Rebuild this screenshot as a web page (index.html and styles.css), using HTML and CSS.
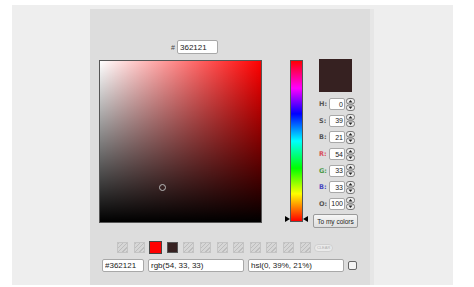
FILE: index.html
```html
<!DOCTYPE html>
<html lang="en">
<head>
    <meta charset="UTF-8">
    <title>Color picker</title>
    <link rel="stylesheet" href="styles.css">
</head>
<body>

<div class="wrap">
    <div class="panel">
        <div class="hex-row">
            <span class="hash">#</span>
            <input class="field hex" type="text" value="362121">
        </div>

        <div class="main-row">
            <div class="sv-box">
                <div class="sv-white"></div>
                <div class="sv-black"></div>
                <div class="sv-cursor"></div>
            </div>

            <div class="hue-bar">
                <span class="arrow arrow-left"></span>
                <span class="arrow arrow-right"></span>
            </div>

            <div class="side">
                <div class="preview"></div>
                <div class="num-row"><label>H:</label><input class="field num" value="0"><svg class="spin" viewBox="0 0 9 13"><use href="#spinner"/></svg></div>
                <div class="num-row"><label>S:</label><input class="field num" value="39"><svg class="spin" viewBox="0 0 9 13"><use href="#spinner"/></svg></div>
                <div class="num-row"><label>B:</label><input class="field num" value="21"><svg class="spin" viewBox="0 0 9 13"><use href="#spinner"/></svg></div>
                <div class="num-row"><label class="lbl-r">R:</label><input class="field num" value="54"><svg class="spin" viewBox="0 0 9 13"><use href="#spinner"/></svg></div>
                <div class="num-row"><label class="lbl-g">G:</label><input class="field num" value="33"><svg class="spin" viewBox="0 0 9 13"><use href="#spinner"/></svg></div>
                <div class="num-row"><label class="lbl-b">B:</label><input class="field num" value="33"><svg class="spin" viewBox="0 0 9 13"><use href="#spinner"/></svg></div>
                <div class="num-row"><label>O:</label><input class="field num" value="100"><svg class="spin" viewBox="0 0 9 13"><use href="#spinner"/></svg></div>
                <button class="btn-add">To my colors</button>
            </div>
        </div>

        <div class="swatch-row">
            <span class="swatch empty"></span>
            <span class="swatch empty"></span>
            <span class="swatch selected" style="background-color: #ff0000;"></span>
            <span class="swatch filled" style="background-color: #362121;"></span>
            <span class="swatch empty"></span>
            <span class="swatch empty"></span>
            <span class="swatch empty"></span>
            <span class="swatch empty"></span>
            <span class="swatch empty"></span>
            <span class="swatch empty"></span>
            <span class="swatch empty"></span>
            <span class="swatch empty"></span>
            <span class="btn-clear">CLEAR</span>
        </div>

        <div class="out-row">
            <input class="field out-hex" value="#362121">
            <input class="field out-wide" value="rgb(54, 33, 33)">
            <input class="field out-wide" value="hsl(0, 39%, 21%)">
            <span class="check"></span>
        </div>
    </div>
</div>

<svg width="0" height="0" style="position:absolute">
    <defs>
        <g id="spinner">
            <rect x="0.5" y="0.5" width="8" height="5.5" rx="2.5" fill="#ececec" stroke="#7a7a7a"/>
            <rect x="0.5" y="7" width="8" height="5.5" rx="2.5" fill="#ececec" stroke="#7a7a7a"/>
            <path d="M2.5 4.6 L4.5 2 L6.5 4.6 Z" fill="#222"/>
            <path d="M2.5 8.4 L4.5 11 L6.5 8.4 Z" fill="#222"/>
        </g>
    </defs>
</svg>

</body>
</html>
```

FILE: styles.css
```css
:root {
    --outer: #eeeeee;
    --panel: #dddddd;
    --field-border: #a8a8a8;
    --text: #333333;
}
body {
    margin: 0;
    background-color: #ffffff;
    font-family: 'Liberation Sans', Arial, sans-serif;
    color: var(--text);
}
.wrap {
    margin: 5px 0 0 12px;
    width: 441px;
    height: 280px;
    background-color: var(--outer);
    padding: 4px 0 0 78px;
    box-sizing: border-box;
}
.panel {
    width: 284px;
    height: 276px;
    background-color: var(--panel);
    border-right: 4px solid #e6e6e6;
    box-sizing: border-box;
    padding-top: 31px;
}
.field {
    display: block;
    box-sizing: border-box;
    height: 13px;
    margin: 0;
    padding: 0 2px;
    border: 1px solid var(--field-border);
    border-radius: 2px;
    background-color: #ffffff;
    font-family: 'Liberation Sans', Arial, sans-serif;
    font-size: 8px;
    color: #222222;
    outline: none;
}
.hex-row {
    display: flex;
    align-items: center;
    margin-left: 81px;
}
.hash { font-size: 7px; width: 6px; color: #444; }
.hex { width: 41px; height: 14px; }

.main-row {
    display: flex;
    align-items: flex-start;
    margin-top: 6px;
    padding-left: 9px;
}
.sv-box {
    position: relative;
    width: 163px;
    height: 163px;
    border: 1px solid #555;
    box-sizing: border-box;
    background-color: #ff0000;
}
.sv-white, .sv-black { position: absolute; inset: 0; }
.sv-white { background: linear-gradient(to right, #ffffff, rgba(255,255,255,0)); }
.sv-black { background: linear-gradient(to bottom, rgba(0,0,0,0), #000000); }
.sv-cursor {
    position: absolute;
    left: 59px;
    top: 123px;
    width: 5px;
    height: 5px;
    border: 1px solid #bbbbbb;
    border-radius: 50%;
}
.hue-bar {
    position: relative;
    width: 13px;
    height: 162px;
    margin-left: 28px;
    border: 1px solid #555;
    box-sizing: border-box;
    background: linear-gradient(to bottom, #ff0000, #ff00ff 17%, #0000ff 33%, #00ffff 50%, #00ff00 67%, #ffff00 83%, #ff0000);
}
.arrow {
    position: absolute;
    bottom: -1px;
    width: 0;
    height: 0;
    border-top: 3px solid transparent;
    border-bottom: 3px solid transparent;
}
.arrow-left { left: -6px; border-left: 5px solid #000; }
.arrow-right { right: -6px; border-right: 5px solid #000; }

.side {
    margin-left: 16px;
    margin-top: -1px;
    width: 40px;
}
.preview {
    width: 33px;
    height: 33px;
    background-color: #362121;
    margin-bottom: 4px;
}
.num-row {
    display: flex;
    align-items: center;
    height: 16.6px;
}
.num-row label {
    width: 10px;
    font-family: 'DejaVu Sans', sans-serif;
    font-size: 6.5px;
    font-weight: bold;
    color: #555;
}
.num-row .lbl-r { color: #d8505c; }
.num-row .lbl-g { color: #4a9a4a; }
.num-row .lbl-b { color: #4848c0; }
.num {
    width: 16px;
    height: 12px;
    text-align: right;
    padding: 0 1px;
    font-size: 7px;
}
.spin {
    display: block;
    width: 9px;
    height: 13px;
    margin-left: 1px;
}
.btn-add {
    display: block;
    width: 45px;
    height: 14px;
    margin: 2px 0 0 -6px;
    padding: 0;
    border: 1px solid #9a9a9a;
    border-radius: 2px;
    background: linear-gradient(#f6f6f6, #dedede);
    font-family: 'Liberation Sans', Arial, sans-serif;
    font-size: 6.5px;
    color: #222;
}

.swatch-row {
    display: flex;
    align-items: center;
    margin: 13px 0 0 27px;
    height: 13px;
}
.swatch {
    width: 11px;
    height: 11px;
    margin-right: 5.6px;
    box-sizing: border-box;
    flex: none;
}
.swatch.empty {
    border: 1px solid #c4c4c4;
    background: repeating-linear-gradient(135deg, #bdbdbd 0 1px, #d6d6d6 1px 3px);
}
.swatch.filled { border: 1px solid #555; }
.swatch.selected {
    width: 13px;
    height: 13px;
    margin: 0 4.6px 0 -1px;
    border: 1px solid #444;
}
.btn-clear {
    width: 19px;
    height: 8px;
    margin-left: -2px;
    border-radius: 4px;
    background-color: #eaeaea;
    border: 1px solid #cfcfcf;
    box-sizing: border-box;
    font-size: 4px;
    line-height: 6px;
    text-align: center;
    color: #b0b0b0;
}

.out-row {
    display: flex;
    align-items: center;
    gap: 4px;
    margin: 5px 0 0 12px;
}
.out-hex { width: 42px; }
.out-wide { width: 96px; }
.check {
    width: 9px;
    height: 9px;
    border: 1px solid #666;
    border-radius: 2px;
    background-color: #f4f4f4;
    box-sizing: border-box;
}
```
